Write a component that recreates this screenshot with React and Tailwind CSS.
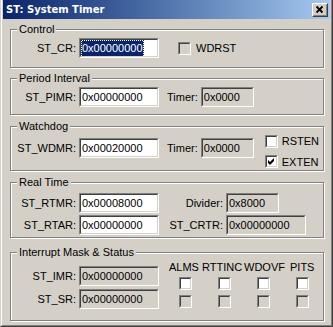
import React from 'react';

const Edit = ({ value, w = 'w-[80px]', ro = false, sel = false }) => (
  <div className={`h-[20px] ${w} shrink-0 border border-t-[#808080] border-l-[#808080] border-b-white border-r-white`}>
    <div
      className={`h-full flex items-center overflow-hidden whitespace-nowrap pl-[1px] border border-t-[#404040] border-l-[#404040] border-b-[#d4d0c8] border-r-[#d4d0c8] ${
        ro ? 'bg-[#d4d0c8]' : 'bg-white'
      }`}
    >
      {sel ? (
        <span className="bg-[#0a246a] text-white leading-[15px] outline-1 outline-dotted outline-[#0a246a]">{value}</span>
      ) : (
        <span>{value}</span>
      )}
    </div>
  </div>
);

const Check = ({ checked = false, disabled = false }) => (
  <div className="w-[13px] h-[13px] shrink-0 border border-t-[#808080] border-l-[#808080] border-b-white border-r-white">
    <div
      className={`w-full h-full border border-t-[#404040] border-l-[#404040] border-b-[#d4d0c8] border-r-[#d4d0c8] ${
        disabled ? 'bg-[#d4d0c8]' : 'bg-white'
      }`}
    >
      {checked && (
        <svg width="9" height="9" viewBox="0 0 9 9">
          <polygon points="1,3 3,5 7,1 7,4 3,8 1,6" fill="#000" />
        </svg>
      )}
    </div>
  </div>
);

const Group = ({ title, className, children }) => (
  <div className={`relative ml-[7px] mr-[6px] border border-[#808080] shadow-[inset_1px_1px_0_#fff,1px_1px_0_#fff] ${className}`}>
    <span className="absolute left-[6px] top-[-7px] bg-[#d4d0c8] px-[2px] leading-[13px]">{title}</span>
    {children}
  </div>
);

const Label = ({ children, w = 'w-[68px]' }) => (
  <span className={`${w} shrink-0 text-right pr-[3px]`}>{children}</span>
);

export default function App() {
  return (
    <div className="w-[333px] h-[327px] border-l border-l-[#d4d0c8] border-r border-b border-[#404040] bg-[#d4d0c8] font-['Liberation_Sans',Arial,sans-serif] text-[11px] text-black">
      <div className="h-full border-l border-l-white border-r border-b border-[#808080] px-[1px]">
        {/* title bar */}
        <div className="h-[19px] flex items-center justify-between pl-[3px] pr-[2px] bg-gradient-to-r from-[#0a246a] to-[#a6caf0]">
          <span className="font-['DejaVu_Sans',sans-serif] font-bold text-[10px] text-white">ST: System Timer</span>
          <div className="w-[16px] h-[14px] border border-t-white border-l-white border-b-[#404040] border-r-[#404040]">
            <div className="w-full h-full bg-[#d4d0c8] border border-t-[#d4d0c8] border-l-[#d4d0c8] border-b-[#808080] border-r-[#808080]">
              <svg width="12" height="10" viewBox="0 0 12 10">
                <path d="M2.5 1.5 L8.5 7.5 M8.5 1.5 L2.5 7.5" stroke="#000" strokeWidth="1.8" />
              </svg>
            </div>
          </div>
        </div>

        <Group title="Control" className="mt-[10px] h-[39px]">
          <div className="flex items-center pt-[8px]">
            <Label>ST_CR:</Label>
            <Edit value="0x00000000" sel />
            <div className="ml-[19px] flex items-center gap-[5px]">
              <Check disabled />
              <span>WDRST</span>
            </div>
          </div>
        </Group>

        <Group title="Period Interval" className="mt-[10px] h-[37px]">
          <div className="flex items-center pt-[8px]">
            <Label>ST_PIMR:</Label>
            <Edit value="0x00000000" />
            <span className="ml-[8px] mr-[3px]">Timer:</span>
            <Edit value="0x0000" w="w-[53px]" ro />
          </div>
        </Group>

        <Group title="Watchdog" className="mt-[11px] h-[45px]">
          <div className="flex items-start pt-[6px]">
            <div className="flex items-center pt-[5px]">
              <Label>ST_WDMR:</Label>
              <Edit value="0x00020000" />
              <span className="ml-[8px] mr-[3px]">Timer:</span>
              <Edit value="0x0000" w="w-[53px]" ro />
            </div>
            <div className="ml-[11px] flex flex-col gap-[4px]">
              <div className="flex items-center gap-[4px]">
                <Check />
                <span>RSTEN</span>
              </div>
              <div className="flex items-center gap-[4px]">
                <Check checked />
                <span>EXTEN</span>
              </div>
            </div>
          </div>
        </Group>

        <Group title="Real Time" className="mt-[11px] h-[56px]">
          <div className="flex flex-col gap-[2px] pt-[10px]">
            <div className="flex items-center">
              <Label>ST_RTMR:</Label>
              <Edit value="0x00008000" />
              <Label w="w-[67px]">Divider:</Label>
              <Edit value="0x8000" w="w-[53px]" ro />
            </div>
            <div className="flex items-center">
              <Label>ST_RTAR:</Label>
              <Edit value="0x00000000" />
              <Label w="w-[67px]">ST_CRTR:</Label>
              <Edit value="0x00000000" ro />
            </div>
          </div>
        </Group>

        <Group title="Interrupt Mask & Status" className="mt-[14px] h-[69px]">
          <div className="flex">
            <div className="flex flex-col gap-[3px] pt-[13px]">
              <div className="flex items-center">
                <Label>ST_IMR:</Label>
                <Edit value="0x00000000" ro />
              </div>
              <div className="flex items-center">
                <Label>ST_SR:</Label>
                <Edit value="0x00000000" ro />
              </div>
            </div>
            <div className="ml-[10px] pt-[8px] flex flex-col">
              <div className="flex leading-[13px]">
                <span className="w-[33px]">ALMS</span>
                <span className="w-[42px]">RTTINC</span>
                <span className="w-[46px]">WDOVF</span>
                <span>PITS</span>
              </div>
              <div className="mt-[3px] ml-[10px] flex gap-[26px]">
                <Check />
                <Check />
                <Check />
                <Check />
              </div>
              <div className="mt-[5px] ml-[10px] flex gap-[26px]">
                <Check disabled />
                <Check disabled />
                <Check disabled />
                <Check disabled />
              </div>
            </div>
          </div>
        </Group>
      </div>
    </div>
  );
}
